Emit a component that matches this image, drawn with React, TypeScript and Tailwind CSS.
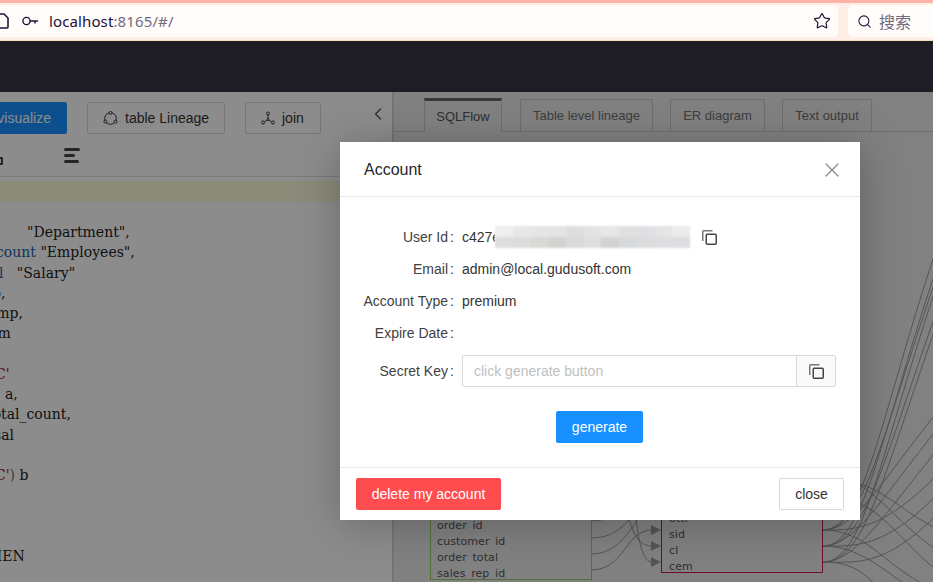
import { Search, Star, X, ChevronLeft } from 'lucide-react';

const codeLines = [
  { key: 'l1', cls: 'pl-[27px]', body: <>"Department",</> },
  { key: 'l2', cls: 'ml-[-4px]', body: <><span className="text-[#1a5fa8]">count</span> "Employees",</> },
  { key: 'l3', cls: 'ml-[-1px]', body: <><span className="text-[#1a5fa8]">l</span>&nbsp;&nbsp; "Salary"</> },
  { key: 'l4', cls: 'ml-[-8px]', body: <>p,</> },
  { key: 'l5', cls: 'ml-[-12px]', body: <>emp,</> },
  { key: 'l6', cls: 'ml-[-11px]', body: <>om</> },
  { key: 'l7', cls: '', body: <>&nbsp;</> },
  { key: 'l8', cls: 'ml-[-5px]', body: <span className="text-[#a31515]">C'</span> },
  { key: 'l9', cls: 'pl-[5px]', body: <>a,</> },
  { key: 'l10', cls: 'ml-[-13px]', body: <>total_count,</> },
  { key: 'l11', cls: 'ml-[-6px]', body: <>sal</> },
  { key: 'l12', cls: '', body: <>&nbsp;</> },
  { key: 'l13', cls: 'ml-[-5px]', body: <><span className="text-[#a31515]">C'</span><span className="text-[#777]">)</span> b</> },
  { key: 'l14', cls: '', body: <>&nbsp;</> },
  { key: 'l15', cls: '', body: <>&nbsp;</> },
  { key: 'l16', cls: '', body: <>&nbsp;</> },
  { key: 'l17', cls: 'ml-[-10px]', body: <>HEN</> },
];

const tabs = [
  { label: 'Table level lineage', cls: 'w-[133px] ml-[18px]' },
  { label: 'ER diagram', cls: 'w-[95px] ml-[17px]' },
  { label: 'Text output', cls: 'w-[90px] ml-[17px]' },
];

const greenRows = ['order_id', 'customer_id', 'order_total', 'sales_rep_id'];
const maroonRows = ['otti', 'sid', 'cl', 'cem'];

// curves leaving the right side of the maroon table: [start y, y at the right edge]
const steepCurves = [[530, 282], [546, 302], [530, 312], [562, 320], [546, 347], [562, 360]];
const shallowCurves = [[530, 405], [546, 422], [562, 443], [530, 470], [546, 490], [562, 510]];

const blurCells = [
  'bg-[#eeeff0]', 'bg-[#e6e7e8]', 'bg-[#e3e5e7]', 'bg-[#e4e4e3]', 'bg-[#dededf]', 'bg-[#e2e3e5]', 'bg-[#e6e6e6]', 'bg-[#e0e0e0]', 'bg-[#dfe0e4]', 'bg-[#e5e5e6]', 'bg-[#ebebec]',
  'bg-[#dddddd]', 'bg-[#dcdcdb]', 'bg-[#d8d8d7]', 'bg-[#d3d3d2]', 'bg-[#d9dadc]', 'bg-[#dedede]', 'bg-[#d4d3d1]', 'bg-[#d6d8dc]', 'bg-[#dcdcde]', 'bg-[#dddee0]', 'bg-[#dcdde0]',
];

const CopyIcon = () => (
  <svg width="15" height="15" viewBox="0 0 15 15" fill="none" className="shrink-0">
    <path d="M10.5 0.75H1.75C1.2 0.75 0.75 1.2 0.75 1.75V11" stroke="#777" strokeWidth="1.5" />
    <rect x="4.25" y="4.25" width="10" height="10" rx="1" stroke="#444" strokeWidth="1.5" />
  </svg>
);

const Row = ({ label, children, className = '' }: { label: string; children?: React.ReactNode; className?: string }) => (
  <div className={`flex items-center ${className}`}>
    <div className="w-[108px] shrink-0 text-right text-[#3f3f3f]">{label}</div>
    <div className="w-[14px] shrink-0 pl-[2px] text-[#3f3f3f]">:</div>
    {children}
  </div>
);

const App = () => {
  return (
    <div className="relative w-[933px] h-[582px] overflow-hidden flex flex-col bg-white font-['Liberation_Sans',sans-serif] text-[14px]">
      {/* browser chrome */}
      <div className="h-[41px] shrink-0 flex flex-col bg-[#ffeee6] border-b border-[#f6dcc4]">
        <div className="h-[3px] bg-[#ffb3a6]" />
        <div className="flex mt-[2px] h-[32px]">
          <div className="w-[838px] bg-[#fffcfa] rounded-r-[5px] flex items-center font-['Noto_Sans',sans-serif] text-[15px] text-[#20123a]">
            <svg width="9" height="16" viewBox="0 0 9 16" fill="none" stroke="#20123a" strokeWidth="1.6" className="shrink-0">
              <path d="M-3 1H4L8 5V14C8 14.6 7.6 15 7 15H-3" />
            </svg>
            <svg width="17" height="12" viewBox="0 0 17 12" fill="none" stroke="#20123a" strokeWidth="1.4" className="ml-[13px] shrink-0">
              <circle cx="4.5" cy="6" r="3.6" />
              <path d="M8 6H16M13 6V8.5" />
            </svg>
            <span className="ml-[10px] tracking-[0.12px]">localhost<span className="text-[#6f6a80]">:8165/#/</span></span>
            <Star size={18} strokeWidth={1.6} className="ml-auto mr-[7px] text-[#20123a]" />
          </div>
          <div className="ml-[10px] flex-1 bg-[#fffcfa] rounded-l-[5px] flex items-center pl-[9px] text-[#20123a]">
            <Search size={15} strokeWidth={1.7} />
            <span className="ml-[7px] text-[16px] text-[#6f6a80] font-['Noto_Sans_CJK_SC',sans-serif]">搜索</span>
          </div>
        </div>
      </div>

      {/* app header */}
      <div className="h-[51px] shrink-0 bg-[#1e1d23]" />

      {/* main panels */}
      <div className="flex flex-1 min-h-0 bg-white">
        <div className="w-[392px] shrink-0 overflow-hidden flex flex-col">
          <div className="h-[51px] shrink-0 flex items-start pt-[10px] text-[#333]">
            <div className="w-[67px] h-[32px] bg-[#1890ff] rounded-r-[2px] text-white flex items-center justify-end pr-[16px]">visualize</div>
            <div className="ml-[20px] w-[138px] h-[32px] border border-[#d9d9d9] rounded-[2px] flex items-center pl-[15px]">
              <svg width="15" height="15" viewBox="0 0 15 15" fill="none" stroke="#333" strokeWidth="1">
                <circle cx="7.5" cy="7.5" r="5.8" />
                <circle cx="7.5" cy="1.9" r="1.5" fill="#fff" /><circle cx="2.4" cy="10.6" r="1.5" fill="#fff" /><circle cx="12.6" cy="10.6" r="1.5" fill="#fff" />
              </svg>
              <span className="ml-[7px]">table Lineage</span>
            </div>
            <div className="ml-[20px] w-[76px] h-[32px] border border-[#d9d9d9] rounded-[2px] flex items-center pl-[15px]">
              <svg width="14" height="14" viewBox="0 0 14 14" fill="none" stroke="#333" strokeWidth="1">
                <circle cx="7" cy="2.5" r="1.5" /><circle cx="2" cy="11.5" r="1.5" /><circle cx="12" cy="11.5" r="1.5" /><circle cx="7" cy="8.5" r="1" />
                <path d="M7 4V7.5M3.4 11L6.2 9M10.6 11L7.8 9" />
              </svg>
              <span className="ml-[7px]">join</span>
            </div>
            <ChevronLeft size={20} strokeWidth={1.6} className="ml-[47px] mt-[2px] text-[#555]" />
          </div>
          <div className="h-[34px] shrink-0 border-b border-[#e0e0e0] flex items-start">
            <div className="w-[3px] h-[8px] mt-[14px] rounded-r-[2px] border-2 border-l-0 border-[#444]" />
            <div className="ml-[61px] mt-[5px] flex flex-col gap-[3px]">
              <div className="w-[16px] h-[3px] rounded-full bg-[#444]" />
              <div className="w-[11px] h-[3px] rounded-full bg-[#444]" />
              <div className="w-[15px] h-[3px] rounded-full bg-[#444]" />
            </div>
          </div>
          <div className="h-[21px] mt-[4px] shrink-0 bg-[#fffbdc]" />
          <div className="pt-[20px] font-['DejaVu_Serif',serif] text-[14px] leading-[20.25px] text-[#222] whitespace-nowrap">
            {codeLines.map((line) => (
              <div key={line.key} className={line.cls}>{line.body}</div>
            ))}
          </div>
        </div>

        <div className="w-[2px] shrink-0 bg-[#d4d4d4]" />

        <div className="flex-1 min-w-0 bg-[#ececec] flex flex-col">
          <div className="h-[40px] shrink-0 flex items-end pt-[6px] pl-[30px] border-b border-[#c8c8c8] text-[13px] text-[#6f6f6f]">
            <div className="w-[78px] h-[34px] -mb-px bg-[#ececec] border border-b-0 border-[#c8c8c8] border-t-[3px] border-t-[#666] flex items-center justify-center text-[#555]">SQLFlow</div>
            {tabs.map((tab) => (
              <div key={tab.label} className={`${tab.cls} h-[32px] border border-b-0 border-[#c8c8c8] flex items-center justify-center`}>{tab.label}</div>
            ))}
          </div>
        </div>
      </div>

      {/* lineage diagram, free canvas */}
      <svg className="absolute left-0 top-0" width="933" height="582" fill="none" stroke="#9a9a9a" strokeWidth="1">
        <path d="M591 521C610 521 615 512 630 505M591 538C612 538 625 528 640 505M591 554C615 554 630 535 645 505M591 570C625 570 625 530 652 530M626 505C630 525 635 546 652 546M634 505C638 530 640 562 652 562" />
        {steepCurves.map(([start, end]) => (
          <path key={`${start}-${end}`} d={`M823 ${start}C870 ${start} 885 ${end + 100} 960 ${end - 100}`} />
        ))}
        {shallowCurves.map(([start, end]) => (
          <path key={`${start}-${end}`} d={`M823 ${start}C860 ${start} 890 ${end + 60} 960 ${end - 20}`} />
        ))}
        <path d="M823 530C870 530 885 570 940 592M823 546C865 546 890 578 930 600M823 562C860 562 870 580 890 600M823 478C880 478 895 510 940 530M823 470C875 480 890 520 940 552M823 495C880 495 900 545 940 572" />
        <path d="M651 525L661 530L651 535ZM651 541L661 546L651 551ZM651 557L661 562L651 567Z" fill="#9a9a9a" stroke="none" />
      </svg>
      <div className="absolute left-[430px] top-[500px] w-[162px] h-[80px] border border-[#9ccc65] pl-[6px] pt-[17px] font-['DejaVu_Sans',sans-serif] text-[11px] tracking-[0.1px] leading-[16px] text-[#555]">
        {greenRows.map((row) => <div key={row} className="h-[16px] pt-[2px]"><div className="h-[11px] leading-[12px] overflow-hidden">{row}</div></div>)}
      </div>
      <div className="absolute left-[661px] top-[500px] w-[162px] h-[73px] border border-[#c2185b] pl-[7px] pt-[10px] font-['DejaVu_Sans',sans-serif] text-[11px] tracking-[0.1px] leading-[16px] text-[#555]">
        {maroonRows.map((row) => <div key={row} className="h-[16px] pt-[2px]"><div className="h-[11px] leading-[12px] overflow-hidden">{row}</div></div>)}
      </div>

      {/* mask */}
      <div className="absolute left-0 right-0 top-[92px] bottom-0 bg-black/45" />

      {/* modal */}
      <div className="absolute left-[340px] top-[142px] w-[520px] h-[378px] bg-white shadow-[0_4px_40px_rgba(0,0,0,0.25)] flex flex-col text-[#333]">
        <div className="h-[55px] shrink-0 border-b border-[#e8e8e8] flex items-center justify-between pl-[24px] pr-[16px] pt-[2px]">
          <span className="text-[16px] text-[#262626]">Account</span>
          <X size={24} strokeWidth={1.2} className="text-[#8c8c8c]" />
        </div>
        <div className="flex-1 min-h-0 flex flex-col">
          <Row label="User Id" className="h-[32px] mt-[24px]">
            <span className="w-[33px] overflow-hidden">c427e</span>
            <div className="w-[195px] h-[22px]">
              <div className="grid grid-cols-11 h-full blur-[1px]">
                {blurCells.map((cell, i) => <div key={i} className={cell} />)}
              </div>
            </div>
            <div className="ml-[12px]"><CopyIcon /></div>
          </Row>
          <Row label="Email" className="h-[32px]"><span>admin@local.gudusoft.com</span></Row>
          <Row label="Account Type" className="h-[32px]"><span>premium</span></Row>
          <Row label="Expire Date" className="h-[32px]" />
          <Row label="Secret Key" className="h-[32px] mt-[6px]">
            <div className="w-[374px] h-[32px] border border-[#d9d9d9] rounded-[2px] flex">
              <div className="flex-1 flex items-center pl-[11px] text-[#bfbfbf]">click generate button</div>
              <div className="w-[39px] shrink-0 border-l border-[#d9d9d9] bg-[#fafafa] flex items-center justify-center">
                <CopyIcon />
              </div>
            </div>
          </Row>
          <div className="flex justify-center mt-[24px] pr-[1px]">
            <div className="w-[87px] h-[32px] bg-[#1890ff] rounded-[2px] text-white flex items-center justify-center">generate</div>
          </div>
        </div>
        <div className="h-[53px] shrink-0 border-t border-[#e8e8e8] flex items-center justify-between px-[16px]">
          <div className="w-[145px] h-[32px] bg-[#ff4d4f] rounded-[2px] text-white flex items-center justify-center">delete my account</div>
          <div className="w-[65px] h-[32px] border border-[#d9d9d9] rounded-[2px] flex items-center justify-center">close</div>
        </div>
      </div>
    </div>
  );
};

export default App;
